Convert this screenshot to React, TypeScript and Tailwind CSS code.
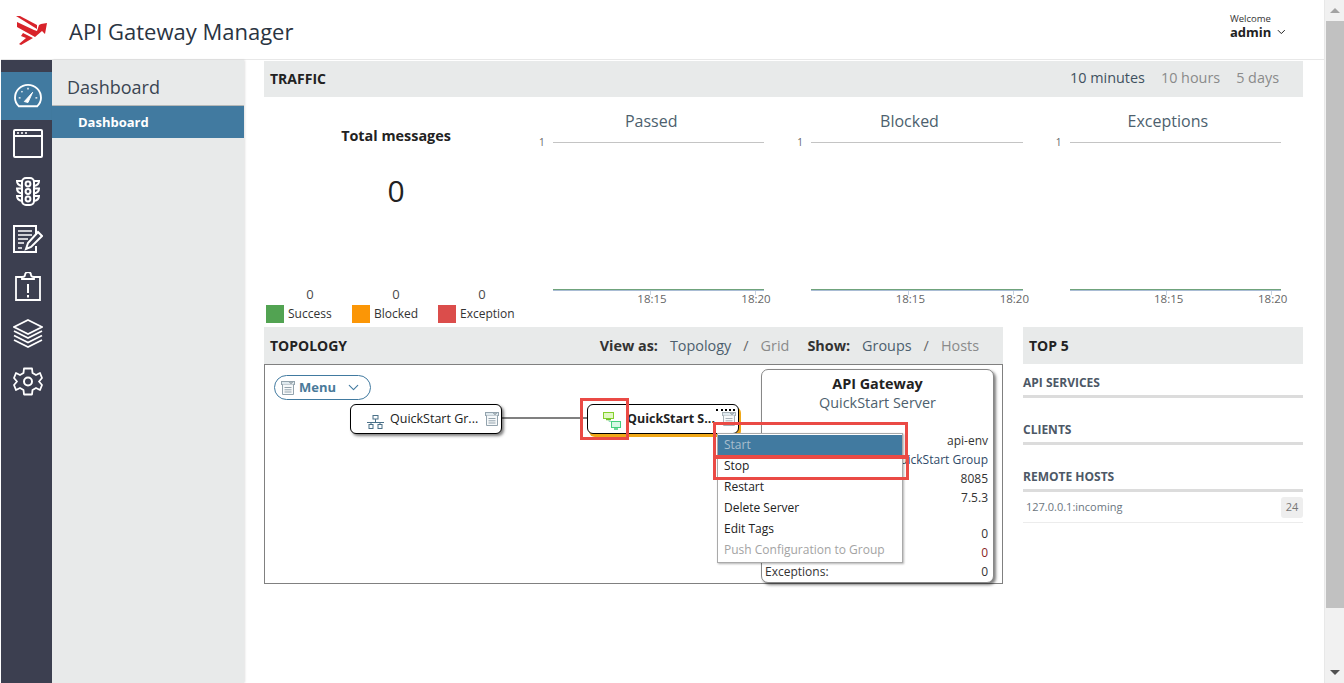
import { ChevronDown } from 'lucide-react';

const font = "font-['Open_Sans',sans-serif]";

function Logo() {
  return (
    <svg width="31" height="29" viewBox="0 0 31 29" fill="#d8232a" className="mt-px">
      <path d="M0 0 H4 L21 9 V13 Z" />
      <path d="M1 6 L18 14 L21 15 L23 9 L25 8 L31 7 L29 18 L26 15 L19 21 L1 11 Z" />
      <path d="M7 17 L17 22 L5 29 L3 28 L10 22 L5 20 Z" />
    </svg>
  );
}

function GaugeIcon() {
  return (
    <svg width="30" height="26" viewBox="0 0 32 28" fill="none" stroke="#fff" strokeWidth="2">
      <path d="M6 25 H26 Q30 21 30 16 A14 14 0 0 0 2 16 Q2 21 6 25 Z" />
      <path d="M12 20 L21 10 L16 21 Z" fill="#fff" strokeWidth="1" />
      <path d="M6 16 H8 M24 16 H26 M9 9 L10 10 M16 5 V7" strokeWidth="1.5" />
    </svg>
  );
}

function WindowIcon() {
  return (
    <svg width="30" height="29" viewBox="0 0 30 29" fill="none" stroke="#fff" strokeWidth="2">
      <rect x="1" y="1" width="28" height="27" rx="1" />
      <path d="M1 7 H29" />
      <path d="M4 4 H6 M8 4 H10 M12 4 H14" strokeWidth="1.5" />
    </svg>
  );
}

function TrafficIcon() {
  return (
    <svg width="24" height="29" viewBox="0 0 24 29" fill="none" stroke="#fff" strokeWidth="2">
      <rect x="6" y="1" width="12" height="27" rx="4" />
      <circle cx="12" cy="7" r="2.4" />
      <circle cx="12" cy="14.5" r="2.4" />
      <circle cx="12" cy="22" r="2.4" />
      <path d="M6 4 H1 Q1 8 6 9 M18 4 H23 Q23 8 18 9 M6 11.5 H1 Q1 15.5 6 16.5 M18 11.5 H23 Q23 15.5 18 16.5 M6 19 H1 Q1 23 6 24 M18 19 H23 Q23 23 18 24" />
    </svg>
  );
}

function EditIcon() {
  return (
    <svg width="30" height="28" viewBox="0 0 30 28" fill="none" stroke="#fff" strokeWidth="2">
      <path d="M23 10 V1 H1 V27 H23 V21" />
      <path d="M5 6 H19 M5 10 H19 M5 14 H15 M5 18 H11" strokeWidth="1.6" />
      <path d="M5 23 H9" strokeWidth="1.5" />
      <path d="M13 24 L15 18 L25 7 L29 11 L18 22 Z" />
    </svg>
  );
}

function ClipboardIcon() {
  return (
    <svg width="26" height="29" viewBox="0 0 26 29" fill="none" stroke="#fff" strokeWidth="1.8">
      <path d="M7 5 H1 V28 H25 V5 H19" />
      <path d="M7 7 V5 Q10 5 10 3 A3 3 0 0 1 16 3 Q16 5 19 5 V7 Z" />
      <path d="M13 12 V21 M13 23 V25.5" strokeWidth="2" />
    </svg>
  );
}

function LayersIcon() {
  return (
    <svg width="30" height="30" viewBox="0 0 30 30" fill="none" stroke="#fff" strokeWidth="1.8">
      <path d="M15 1 L29 8 L15 15 L1 8 Z" />
      <path d="M1 12 L15 19 L29 12" />
      <path d="M1 16.5 L15 23.5 L29 16.5" />
      <path d="M1 21 L15 28 L29 21" />
    </svg>
  );
}

function GearIcon() {
  return (
    <svg width="30" height="29" viewBox="0 0 30 29" fill="none" stroke="#fff" strokeWidth="1.8">
      <path d="M11 1.5 H19 L19.5 6 L23 8 L27 6 L29 11 L26 14.5 L29 18 L27 23 L23 21 L19.5 23 L19 27.5 H11 L10.5 23 L7 21 L3 23 L1 18 L4 14.5 L1 11 L3 6 L7 8 L10.5 6 Z" strokeLinejoin="round" />
      <circle cx="15" cy="14.5" r="4" strokeWidth="2" />
    </svg>
  );
}

function MenuGlyph({ faded = false }: { faded?: boolean }) {
  return (
    <svg width="14" height="14" viewBox="0 0 14 14" fill="none" stroke={faded ? '#a8b2b8' : '#93a3ad'}>
      <rect x="0.5" y="0.5" width="13" height="3" fill="#dfe9ee" />
      <path d="M1.5 3.5 V13.5 H12.5 V3.5" fill="#f7f9fa" />
      <path d="M3.5 6.5 H10.5 M3.5 8.8 H10.5 M3.5 11 H10.5" />
      <path d="M8.5 1 L10 2.6 L11.5 1" stroke="#6d7a82" />
    </svg>
  );
}

function GroupGlyph() {
  return (
    <svg width="17" height="14" viewBox="0 0 17 14" fill="none" stroke="#4a7088">
      <rect x="6" y="0.5" width="5" height="3.5" />
      <path d="M8.5 4 V7 M0 7.5 H17 M4 7.5 V9.5 M13 7.5 V9.5" />
      <rect x="2" y="9.5" width="4" height="4" />
      <rect x="11" y="9.5" width="4" height="4" />
    </svg>
  );
}

function ServersGlyph() {
  return (
    <svg width="18" height="18" viewBox="0 0 18 18" fill="none">
      <path d="M6 8 V9.5 H12 V10" stroke="#8fdcc0" />
      <rect x="0.5" y="0.5" width="10" height="6" fill="#e2f8c4" stroke="#84d02c" />
      <path d="M3 7.5 H8" stroke="#6fc22c" strokeWidth="1.5" />
      <rect x="8.5" y="9.5" width="9" height="6" fill="#d6f8e6" stroke="#45d07e" />
      <path d="M11 17 H15" stroke="#3ec878" strokeWidth="1.5" />
    </svg>
  );
}

function ChartBlock({ title }: { title: string }) {
  return (
    <div className="flex h-[230px] w-[258.33px] flex-col pt-[14px] pr-[22px]">
      <div className="pl-[10px] text-center text-[16px] leading-[20px] text-[#4d5f6e]">{title}</div>
      <div className="mt-[4px] flex items-center pl-[11px]">
        <span className="w-[14px] text-[10px] leading-[14px] text-[#666]">1</span>
        <div className="h-px flex-1 bg-[#c4c4c4]" />
      </div>
      <div className="flex-1" />
      <div className="ml-[25px] h-px bg-[#6fa37c]" />
      <div className="ml-[25px] h-px bg-[#a9bcd4]" />
      <div className="ml-[25px] flex h-[16px] text-[11.5px] text-[#666]">
        <div className="ml-[75px] flex w-[48px] shrink-0 flex-col items-center">
          <span className="mr-[4px] h-[4px] w-px bg-[#c8d3e0]" />
          <span className="-mt-[4px] leading-[16px]">18:15</span>
        </div>
        <div className="ml-[56px] flex w-[48px] shrink-0 flex-col items-center">
          <span className="mr-[2px] h-[4px] w-px bg-[#c8d3e0]" />
          <span className="-mt-[4px] leading-[16px]">18:20</span>
        </div>
      </div>
      <div className="h-[20px]" />
    </div>
  );
}

function Legend({ swatch, label, value }: { swatch: string; label: string; value: string }) {
  return (
    <div className="w-[86px]">
      <div className="pl-[6px] text-center text-[13px] leading-[18px] text-[#4a4a4a]">{value}</div>
      <div className="mt-[2px] flex items-center gap-[4px] pl-[2px]">
        <span className={`h-[18px] w-[18px] ${swatch}`} />
        <span className="text-[12px] leading-[18px] text-[#333]">{label}</span>
      </div>
    </div>
  );
}

function TopSection({ title, children }: { title: string; children?: React.ReactNode }) {
  return (
    <div className="mb-[23px] last:mb-0">
      <div className="border-b-[3px] border-[#dcdcdc] pb-[4px] text-[12px] leading-[17px] font-bold text-[#4d5866]">{title}</div>
      {children}
    </div>
  );
}

const menuItems = ['Stop', 'Restart', 'Delete Server', 'Edit Tags'];

export default function App() {
  return (
    <div className={`flex h-[683px] w-[1344px] overflow-hidden bg-white ${font}`}>
      <div className="flex min-w-0 flex-1 flex-col pl-px">
        {/* header */}
        <header className="flex h-[60px] shrink-0 items-center border-b border-[#e8e8e8] bg-white">
          <div className="ml-[15px] w-[53px]">
            <Logo />
          </div>
          <h1 className="mt-[4px] text-[22px] font-normal text-[#2a3442]">API Gateway Manager</h1>
          <div className="ml-auto mr-[36px] mb-[6px] w-[58px]">
            <div className="text-[9.5px] leading-[11px] text-[#333]">Welcome</div>
            <div className="flex items-center gap-[4px] text-[13px] leading-[16px] font-bold whitespace-nowrap text-[#222]">
              admin <ChevronDown size={16} strokeWidth={1.8} className="text-[#111]" />
            </div>
          </div>
        </header>

        <div className="flex min-h-0 flex-1">
          {/* icon rail */}
          <nav className="flex w-[51px] shrink-0 flex-col items-center bg-[#3c3f50] pt-[12px]">
            <div className="flex h-[48px] w-full items-center justify-center bg-[#417aa0] pl-[3px]">
              <GaugeIcon />
            </div>
            <div className="flex h-[47.5px] w-full items-center justify-center pl-[3px]"><WindowIcon /></div>
            <div className="flex h-[47.5px] w-full items-center justify-center pl-[3px]"><TrafficIcon /></div>
            <div className="flex h-[47.5px] w-full items-center justify-center pl-[3px]"><EditIcon /></div>
            <div className="flex h-[47.5px] w-full items-center justify-center pl-[3px]"><ClipboardIcon /></div>
            <div className="flex h-[47.5px] w-full items-center justify-center pl-[3px]"><LayersIcon /></div>
            <div className="flex h-[47.5px] w-full items-center justify-center pl-[3px]"><GearIcon /></div>
          </nav>

          {/* sub nav */}
          <aside className="w-[192px] shrink-0 bg-[#e8eaea] shadow-[1px_0_2px_rgba(0,0,0,0.12)]">
            <div className="h-[46px] border-b border-[#b5b8b8] pt-[15px] pl-[15px] text-[18px] leading-[25px] text-[#3a4552]">Dashboard</div>
            <div className="h-[32px] bg-[#417aa0] pl-[26px] text-[13px] leading-[32px] font-bold text-white">Dashboard</div>
          </aside>

          {/* main */}
          <main className="flex w-[1079px] shrink-0 flex-col pt-px pl-[20px]">
            <div className="flex h-[36px] w-[1039px] items-center bg-[#e8eaea] px-[6px] pb-[2px]">
              <span className="text-[14px] font-bold text-[#222]">TRAFFIC</span>
              <div className="ml-auto mr-[18px] flex gap-[16px] text-[14.4px]">
                <span className="text-[#3f5160]">10 minutes</span>
                <span className="text-[#8a8a8a]">10 hours</span>
                <span className="text-[#8a8a8a]">5 days</span>
              </div>
            </div>

            <div className="flex w-[1039px]">
              <div className="flex h-[230px] w-[264px] shrink-0 flex-col">
                <div className="mt-[29px] text-center text-[14.4px] leading-[20px] font-bold text-[#222]">Total messages</div>
                <div className="mt-[25px] text-center text-[30px] leading-[40px] text-[#222]">0</div>
                <div className="flex-1" />
                <div className="mb-[4px] flex">
                  <Legend swatch="bg-[#52a352]" label="Success" value="0" />
                  <Legend swatch="bg-[#fb9606]" label="Blocked" value="0" />
                  <Legend swatch="bg-[#db4d4b]" label="Exception" value="0" />
                </div>
              </div>
              <ChartBlock title="Passed" />
              <ChartBlock title="Blocked" />
              <ChartBlock title="Exceptions" />
            </div>

            <div className="flex w-[1039px] gap-[20px]">
              <section className="w-[739px] shrink-0">
                <div className="flex h-[37px] items-center bg-[#e8eaea] px-[6px]">
                  <span className="text-[14px] font-bold text-[#222]">TOPOLOGY</span>
                  <div className="ml-auto mr-[18px] flex items-center text-[14.4px] text-[#4d5f6e]">
                    <span className="mr-[12px] font-bold text-[#333]">View as:</span>
                    <span>Topology</span>
                    <span className="mx-[12px] text-[#666]">/</span>
                    <span className="text-[#8a8a8a]">Grid</span>
                    <span className="mr-[12px] ml-[18px] font-bold text-[#333]">Show:</span>
                    <span>Groups</span>
                    <span className="mx-[12px] text-[#666]">/</span>
                    <span className="text-[#8a8a8a]">Hosts</span>
                  </div>
                </div>

                {/* diagram canvas */}
                <div className="relative h-[220px] border border-[#808080] bg-white">
                  <button className="absolute top-[10px] left-[9px] flex h-[25px] w-[97px] items-center rounded-full border border-[#417aa0] pl-[6px] text-[13px] font-bold text-[#4a7a9a]">
                    <MenuGlyph />
                    <span className="ml-[4px]">Menu</span>
                    <ChevronDown size={17} strokeWidth={1.5} className="ml-[9px] text-[#417aa0]" />
                  </button>

                  <div className="absolute top-[52px] left-[237px] h-[2px] w-[85px] bg-[#808080]" />

                  <div className="absolute top-[39px] left-[85px] flex h-[30px] w-[152px] items-center rounded-[6px] border border-black bg-white shadow-[2px_2px_3px_rgba(0,0,0,0.5)]">
                    <span className="mt-[5px] ml-[16px]"><GroupGlyph /></span>
                    <span className="ml-[6px] text-[12.5px] whitespace-nowrap text-[#222]">QuickStart Gr...</span>
                    <span className="ml-auto mr-[2px]"><MenuGlyph /></span>
                  </div>

                  <div className="absolute top-[39px] left-[322px] flex h-[30px] w-[152px] items-center rounded-[6px] border border-black bg-white shadow-[2px_3px_0_#f0a818]">
                    <span className="mt-[4px] ml-[15px]"><ServersGlyph /></span>
                    <span className="ml-[6px] text-[12.5px] font-bold whitespace-nowrap text-[#222]">QuickStart S...</span>
                    <span className="ml-auto mr-[2px]"><MenuGlyph faded /></span>
                    <span className="absolute top-[4px] right-[3px] h-[3px] w-[19px] border-t-2 border-dotted border-black" />
                  </div>

                  {/* server info card */}
                  <div className="absolute top-[4px] left-[496px] flex h-[214px] w-[233px] flex-col rounded-[7px] border border-[#888] bg-white px-[3px] shadow-[2px_2px_3px_rgba(0,0,0,0.5)]">
                    <div className="mt-[4px] text-center text-[14.4px] leading-[20px] font-bold text-[#222]">API Gateway</div>
                    <div className="-mt-px text-center text-[14.4px] leading-[20px] text-[#4d5f6e]">QuickStart Server</div>
                    <div className="mt-[18px] pr-[2px] text-right text-[12px] leading-[19px] text-[#333]">
                      <div className="h-[19px]">api-env</div>
                      <div className="h-[19px] whitespace-nowrap text-[#2f4a68]">QuickStart Group</div>
                      <div className="h-[19px]">8085</div>
                      <div className="h-[19px]">7.5.3</div>
                      <div className="h-[17px]" />
                      <div className="h-[19px]">0</div>
                      <div className="h-[19px] text-[#8a1f1f]">0</div>
                      <div className="flex h-[19px] justify-between"><span>Exceptions:</span><span>0</span></div>
                    </div>
                  </div>

                  {/* context menu */}
                  <ul className="absolute top-[68px] left-[452px] w-[186px] border border-[#aaa] bg-white py-px text-[12px] text-[#222] shadow-[1px_1px_2px_rgba(0,0,0,0.3)]">
                    <li className="h-[21px] bg-[#417aa0] pl-[6px] leading-[19px] text-[#a9bfce]">Start</li>
                    {menuItems.map((item) => (
                      <li key={item} className="h-[21px] pl-[6px] leading-[19px]">{item}</li>
                    ))}
                    <li className="h-[21px] pl-[6px] leading-[19px] text-[#a3a3a3]">Push Configuration to Group</li>
                  </ul>

                  {/* annotation boxes from the screenshot */}
                  <div className="absolute top-[33px] left-[315px] h-[42px] w-[49px] border-[3px] border-[#ea4a45]" />
                  <div className="absolute top-[57px] left-[448px] h-[37px] w-[195px] border-[3px] border-[#ea4a45]" />
                  <div className="absolute top-[90px] left-[448px] h-[25px] w-[196px] border-[3px] border-[#ea4a45]" />
                </div>
              </section>

              <section className="w-[280px] shrink-0">
                <div className="flex h-[37px] items-center bg-[#e8eaea] px-[6px] text-[14px] font-bold text-[#222]">TOP 5</div>
                <div className="mt-[10px]">
                  <TopSection title="API SERVICES" />
                  <TopSection title="CLIENTS" />
                  <TopSection title="REMOTE HOSTS">
                    <div className="flex h-[31px] items-center border-b border-[#ececec] pl-[3px] text-[11px] text-[#6b7680]">
                      <span>127.0.0.1:incoming</span>
                      <span className="ml-auto flex h-[21px] w-[22px] items-center justify-center rounded-[3px] bg-[#eeeeee] text-[#777]">24</span>
                    </div>
                  </TopSection>
                </div>
              </section>
            </div>
          </main>
        </div>
      </div>

      {/* scrollbar */}
      <div className="flex w-[20px] shrink-0 flex-col items-center border-l border-[#e8e8e8] bg-[#f1f1f1] pl-px">
        <div className="flex h-[21px] items-center">
          <div className="h-0 w-0 border-x-[5px] border-b-[5px] border-x-transparent border-b-[#a3a3a3]" />
        </div>
        <div className="h-[587px] w-full bg-[#c1c1c1]" />
        <div className="flex-1" />
        <div className="flex h-[21px] items-center">
          <div className="h-0 w-0 border-x-[5px] border-t-[5px] border-x-transparent border-t-[#505050]" />
        </div>
      </div>
    </div>
  );
}
